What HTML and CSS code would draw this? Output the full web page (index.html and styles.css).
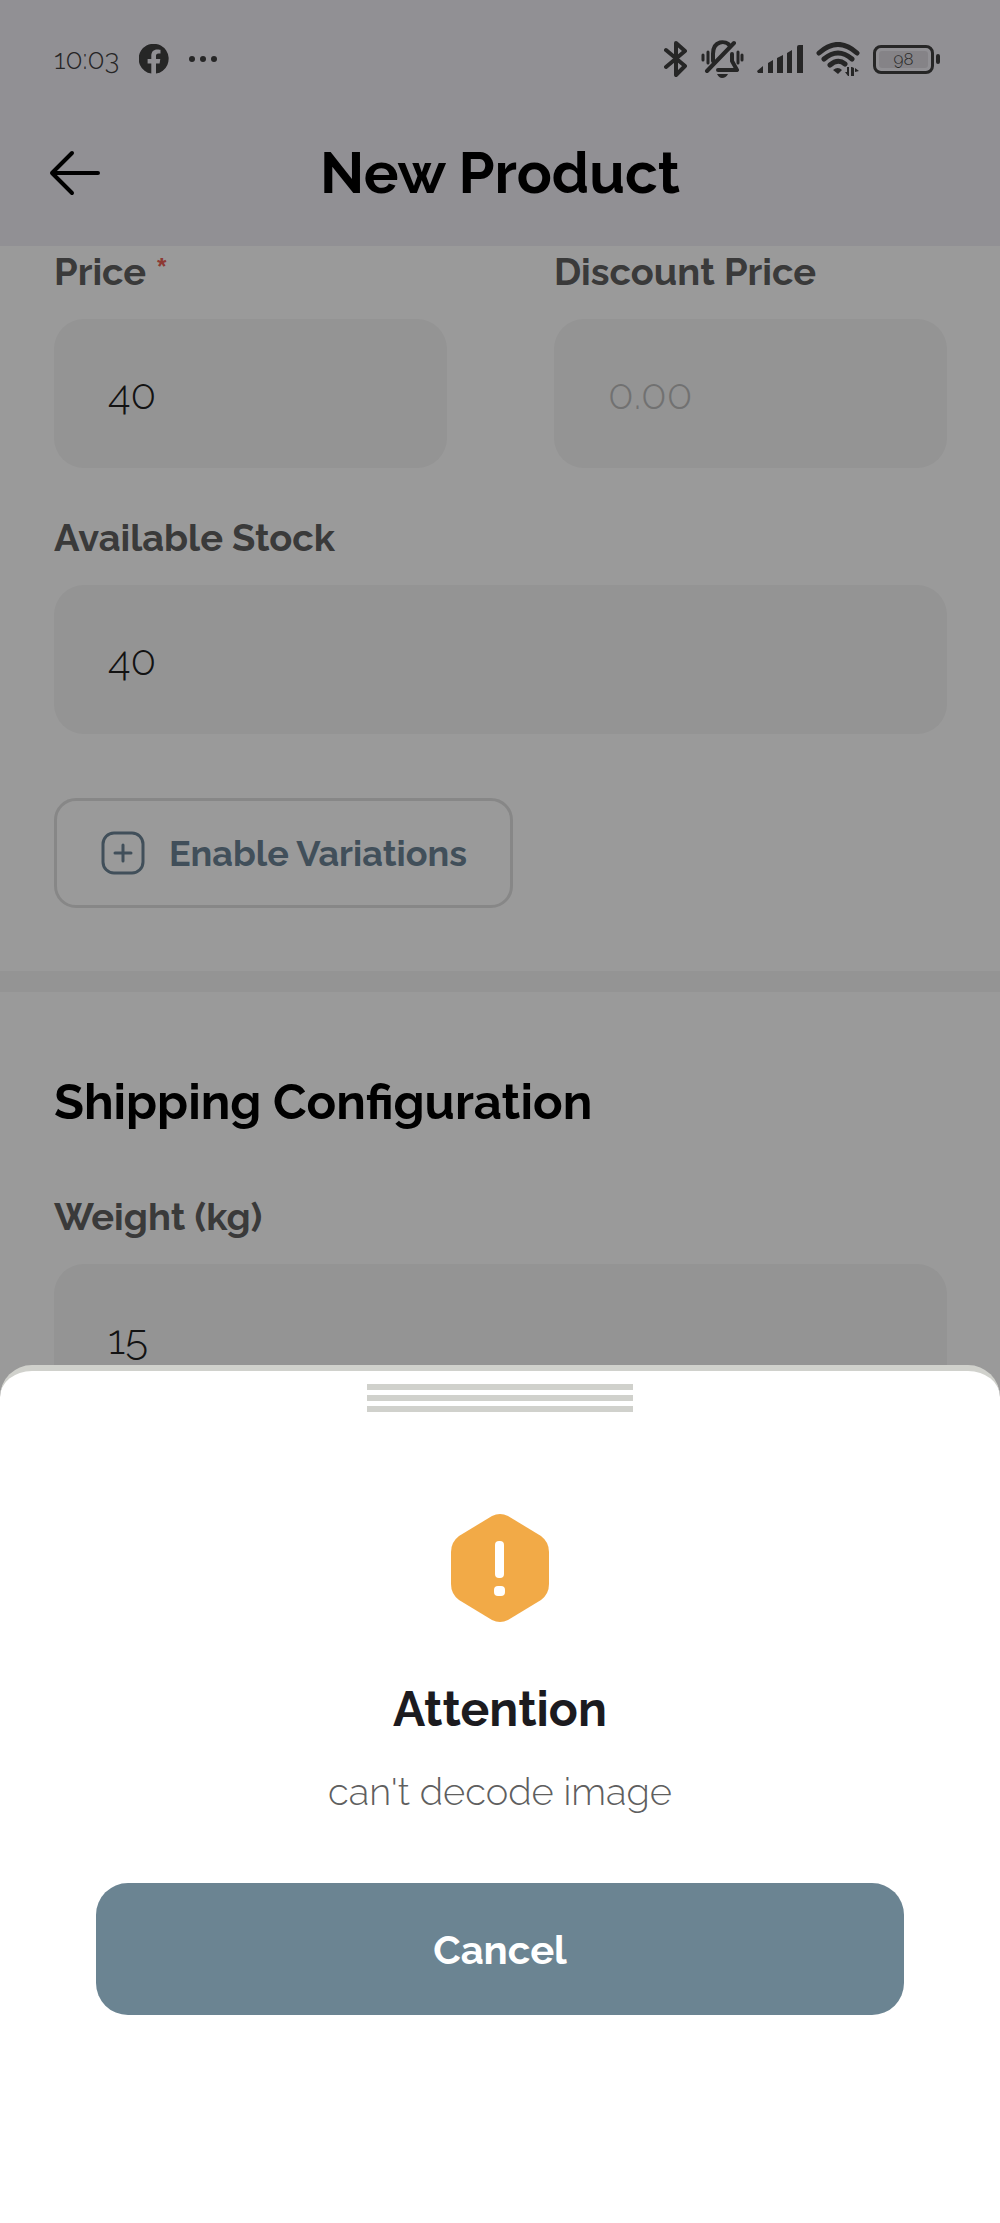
FILE: index.html
```html
<!DOCTYPE html>
<html lang="en">
<head>
  <meta charset="utf-8">
  <meta name="viewport" content="width=device-width, initial-scale=1">
  <title>New Product</title>
  <link rel="stylesheet" href="styles.css">
</head>
<body>
  <header class="app-header">
    <div class="status-bar">
      <div class="status-left">
        <time class="clock">10:03</time>
        <svg width="30" height="30" viewBox="0 0 30 30" aria-label="Facebook">
          <path fill="currentColor" d="M12.300 29.600V19.500H8.600V15H12.300V11.800C12.300 7.600 14.600 5.400 18.300 5.400C19.900 5.400 21.500 5.700 21.500 5.700V9.500H19.500C17.600 9.500 17 10.600 17 11.800V15H21.300L20.600 19.500H17V29.600A15 15 0 1 0 12.300 29.600Z"/>
        </svg>
        <svg width="28" height="6" viewBox="0 0 28 6" aria-label="More notifications">
          <g fill="currentColor"><circle cx="3" cy="3" r="3"/><circle cx="14" cy="3" r="3"/><circle cx="25" cy="3" r="3"/></g>
        </svg>
      </div>
      <div class="status-right">
        <svg width="24" height="38" viewBox="0 0 24 38" aria-label="Bluetooth">
          <path fill="none" stroke="currentColor" stroke-width="4" stroke-linejoin="round" stroke-linecap="round" d="M2 10L21 26L12 35V3L21 11L2 27"/>
        </svg>
        <svg width="43" height="38" viewBox="0 0 43 38" aria-label="Muted">
          <g fill="none" stroke="currentColor" stroke-width="4" stroke-linecap="round" stroke-linejoin="round">
            <path d="M12 21V14C12 0 25 0 29 6M31 14V21L36 30H17M6 31L33 3"/>
            <path stroke-width="3" d="M2 15V20M7 12V23M37 12V23M41 15V20"/>
          </g>
          <path fill="currentColor" d="M16 34H27Q25 38 21 38Q18 38 16 34Z"/>
        </svg>
        <svg width="46" height="28" viewBox="0 0 46 28" aria-label="Signal">
          <g fill="currentColor">
            <path d="M0 26L6 21V28H1ZM11 18L16 15V28H11ZM20 13L26 10V28H20ZM30 8L35 5V28H30ZM40 2Q40 0 42 0H46V28H40Z"/>
          </g>
        </svg>
        <svg width="44" height="34" viewBox="0 0 44 34" aria-label="Wi-Fi">
          <g fill="none" stroke="currentColor" stroke-width="5" stroke-linecap="round">
            <path d="M3 11Q22 -6 41 11M8 17Q22 5 36 17M14 23Q22 16 29 22"/>
          </g>
          <path fill="currentColor" d="M17 28Q22 24 26 28L22 32ZM33 25V34H32L29 30H31V25ZM35 34V25H36L38 26V34ZM39 26L43 29L39 30Z"/>
        </svg>
        <div class="battery">
          <span class="battery-body"><span class="battery-level">98</span></span>
          <span class="battery-cap"></span>
        </div>
      </div>
    </div>
    <div class="title-bar">
      <button class="back" type="button" aria-label="Back">
        <svg width="52" height="46" viewBox="0 0 52 46">
          <path fill="none" stroke="currentColor" stroke-width="4" stroke-linecap="round" stroke-linejoin="round" d="M23 3L3 23L23 43M3 23H49"/>
        </svg>
      </button>
      <h1 class="title">New Product</h1>
    </div>
  </header>

  <main>
    <section class="form">
      <div class="field-row">
        <div class="field">
          <label for="price">Price <span class="required">*</span></label>
          <input id="price" type="text" inputmode="decimal" value="40">
        </div>
        <div class="field">
          <label for="discount">Discount Price</label>
          <input id="discount" type="text" inputmode="decimal" placeholder="0.00">
        </div>
      </div>
      <div class="field">
        <label for="stock">Available Stock</label>
        <input id="stock" type="text" inputmode="numeric" value="40">
      </div>
      <button class="variations" type="button">
        <svg width="44" height="44" viewBox="0 0 44 44" aria-hidden="true">
          <g fill="none" stroke="currentColor" stroke-width="3" stroke-linecap="round">
            <rect x="2" y="2" width="40" height="40" rx="11"/>
            <path d="M22 14V30M14 22H30"/>
          </g>
        </svg>
        Enable Variations
      </button>
    </section>

    <section class="form shipping">
      <h2 class="section-title">Shipping Configuration</h2>
      <div class="field">
        <label for="weight">Weight (kg)</label>
        <input id="weight" type="text" inputmode="decimal" value="15">
      </div>
    </section>
  </main>

  <div class="scrim"></div>

  <div class="sheet" role="alertdialog" aria-labelledby="alert-title" aria-describedby="alert-text">
    <div class="handle"><span></span><span></span><span></span></div>
    <svg class="alert-icon" width="98" height="108" viewBox="0 0 98 108" aria-hidden="true">
      <path fill="#f2aa47" d="M41 2Q49 -2 57 2L90 22Q98 28 98 38V70Q98 80 90 86L57 106Q49 110 41 106L8 86Q0 80 0 70V38Q0 28 8 22Z"/>
      <rect x="44" y="27" width="9" height="37" rx="4" fill="#fff"/>
      <rect x="43" y="72" width="11" height="10" rx="4" fill="#fff"/>
    </svg>
    <h2 class="alert-title" id="alert-title">Attention</h2>
    <p class="alert-text" id="alert-text">can't decode image</p>
    <button class="cancel" type="button">Cancel</button>
  </div>
</body>
</html>
```
FILE: styles.css
```css
* {
  box-sizing: border-box;
}

body {
  margin: 0;
  min-height: 100vh;
  background: #fff;
  color: #000;
  font-family: Raleway, "Open Sans", sans-serif;
}

h1,
h2,
p {
  margin: 0;
  font-weight: 700;
}

button,
input {
  font-family: inherit;
}

svg {
  display: block;
  flex: none;
}

.app-header {
  background: #f1eef6;
}

.status-bar {
  display: flex;
  align-items: center;
  justify-content: space-between;
  height: 100px;
  padding: 18px 60px 0 54px;
  color: #3f3f3f;
}

.status-left {
  display: flex;
  align-items: center;
  gap: 20px;
}

.status-right {
  display: flex;
  align-items: center;
  gap: 13px;
}

.clock {
  font-size: 28px;
  font-weight: 300;
}

.battery {
  display: flex;
  align-items: center;
  gap: 2px;
}

.battery-body {
  width: 61px;
  height: 29px;
  padding: 3px;
  border: 3px solid #3f3f3f;
  border-radius: 8px;
}

.battery-level {
  display: block;
  height: 17px;
  border-radius: 3px;
  background: #dcdae0;
  font-size: 17px;
  font-weight: 300;
  line-height: 17px;
  text-align: center;
}

.battery-cap {
  width: 4px;
  height: 10px;
  border-radius: 2px;
  background: #3f3f3f;
}

.title-bar {
  display: grid;
  grid-template-columns: 100px 1fr 100px;
  align-items: center;
  height: 146px;
  padding: 0 49px;
}

.back {
  padding: 0;
  border: 0;
  background: none;
  color: #000;
}

.title {
  font-size: 58px;
  line-height: 80px;
  text-align: center;
}

.form {
  display: flex;
  flex-direction: column;
  gap: 44px;
  padding: 0 53px 63px 54px;
}

.shipping {
  gap: 57px;
  padding-top: 78px;
  border-top: 21px solid #f5f5f5;
}

.field-row {
  display: grid;
  grid-template-columns: 1fr 1fr;
  gap: 107px;
}

.field {
  display: flex;
  flex-direction: column;
  gap: 21px;
}

.field label {
  color: #606060;
  font-size: 38px;
  font-weight: 700;
  line-height: 52px;
}

.required {
  color: #e95f55;
}

.field input {
  width: 100%;
  height: 149px;
  padding: 2px 54px 0;
  border: 0;
  border-radius: 30px;
  background: #f5f5f5;
  color: #212121;
  font-size: 42px;
  font-weight: 300;
}

.field input::placeholder {
  color: #bcbcbc;
  opacity: 1;
}

.variations {
  display: flex;
  align-items: center;
  align-self: flex-start;
  gap: 24px;
  height: 110px;
  margin-top: 20px;
  padding: 0 43px 0 44px;
  border: 3px solid #e0e0e0;
  border-radius: 22px;
  background: none;
  color: #6c8495;
  font-size: 36px;
  font-weight: 700;
}

.section-title {
  font-size: 49px;
  line-height: 64px;
}

.scrim {
  position: fixed;
  inset: 0;
  background: rgba(0, 0, 0, 0.395);
}

.sheet {
  position: fixed;
  right: 0;
  bottom: 0;
  left: 0;
  display: flex;
  flex-direction: column;
  align-items: center;
  padding: 13px 96px 208px;
  border-top: 6px solid #d0d1cc;
  border-radius: 32px 32px 0 0;
  background: #fff;
}

.handle {
  display: grid;
  gap: 5px;
  width: 266px;
}

.handle span {
  height: 6px;
  background: #d0d1cc;
}

.alert-icon {
  margin-top: 102px;
}

.alert-title {
  margin-top: 55px;
  color: #1c1b1f;
  font-size: 48px;
  line-height: 64px;
}

.alert-text {
  margin-top: 23px;
  color: #5f5f5f;
  font-size: 38px;
  font-weight: 300;
  line-height: 56px;
}

.cancel {
  align-self: stretch;
  height: 132px;
  margin-top: 63px;
  border: 0;
  border-radius: 32px;
  background: #6b8492;
  color: #fff;
  font-size: 40px;
  font-weight: 700;
}
```
